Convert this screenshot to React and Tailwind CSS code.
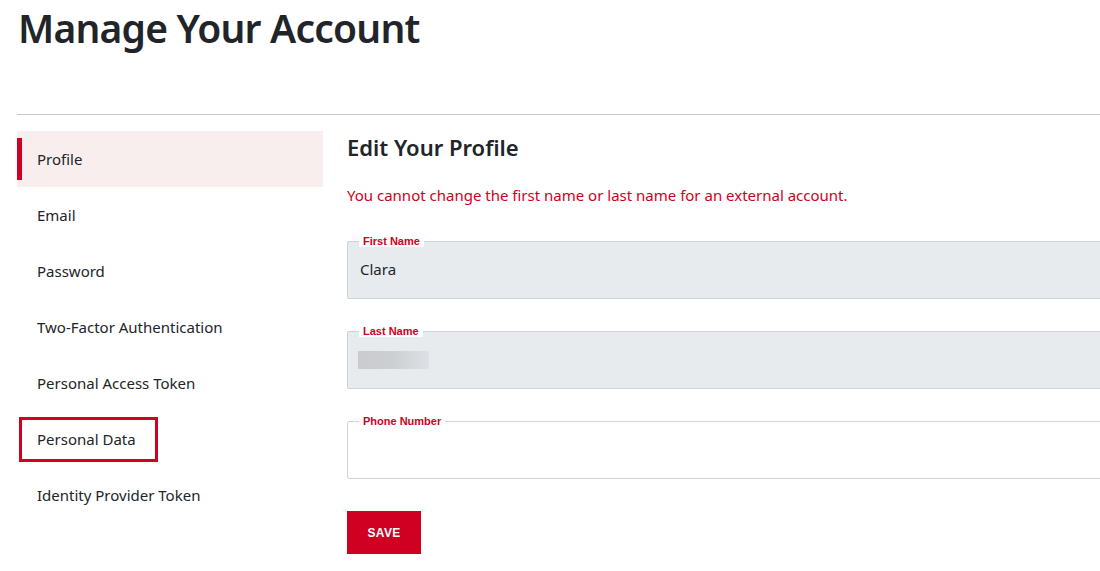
import React from 'react';

const RED = 'text-[#cf0022]';

const navItems = [
  'Profile',
  'Email',
  'Password',
  'Two-Factor Authentication',
  'Personal Access Token',
  'Personal Data',
  'Identity Provider Token',
];

function Field({ label, value, disabled, blurred }) {
  return (
    <fieldset
      className={`border border-[#ced4da] rounded-[2px] h-[64px] px-3 ${
        disabled ? 'bg-[#e8ebee]' : 'bg-white'
      }`}
    >
      <legend className="ml-[-1px] px-1 bg-white text-[11px] font-bold leading-[12px] text-[#cf0022] font-['Liberation_Sans',Arial,sans-serif]">
        {label}
      </legend>
      <div className="pt-[12px] text-[15px] text-[#212529] leading-5">
        {blurred ? (
          <div className="ml-[-2px] mt-[2px] w-[71px] h-[18px] bg-gradient-to-r from-[#c9cbce] via-[#cdd0d3] to-[#dde0e4]" />
        ) : (
          value
        )}
      </div>
    </fieldset>
  );
}

export default function App() {
  return (
    <div className="min-h-[571px] bg-white text-[#212529] font-['Noto_Sans','Open_Sans',sans-serif] overflow-hidden">
      <div className="pl-[17px]">
        <h1 className="pl-[1px] text-[39px] font-semibold leading-[56px] tracking-[-0.8px]">
          Manage Your Account
        </h1>
        <hr className="mt-[58px] border-0 border-t border-[#c8c8c8] w-[1100px]" />

        <div className="flex mt-[16px] gap-[24px]">
          <nav className="w-[306px] shrink-0">
            {navItems.map((item, i) => {
              const active = i === 0;
              const boxed = item === 'Personal Data';
              return (
                <div
                  key={item}
                  className={`relative h-[56px] flex items-center pl-[20px] text-[15px] ${
                    active ? 'bg-[#f8eeee]' : ''
                  }`}
                >
                  {active && (
                    <span className="absolute left-0 top-[7px] bottom-[7px] w-[5px] bg-[#cf0022]" />
                  )}
                  {boxed ? (
                    <span className="ml-[-18px] border-[3px] border-[#cf0022] px-[15px] h-[45px] flex items-center w-[139px]">
                      {item}
                    </span>
                  ) : (
                    item
                  )}
                </div>
              );
            })}
          </nav>

          <div className="flex-1 min-w-0">
            <h2 className="text-[22px] font-semibold leading-[32px]">
              Edit Your Profile
            </h2>
            <p className={`mt-[22px] text-[15px] leading-5 ${RED}`}>
              You cannot change the first name or last name for an external account.
            </p>
            <div className="mt-[30px] flex flex-col gap-[26px] w-[780px]">
              <Field label="First Name" value="Clara" disabled />
              <Field label="Last Name" disabled blurred />
              <Field label="Phone Number" />
            </div>
            <button className="mt-[32px] w-[74px] h-[43px] bg-[#cf0022] text-white text-[12px] font-bold tracking-[0.3px] font-['Liberation_Sans',Arial,sans-serif]">
              SAVE
            </button>
          </div>
        </div>
      </div>
    </div>
  );
}
